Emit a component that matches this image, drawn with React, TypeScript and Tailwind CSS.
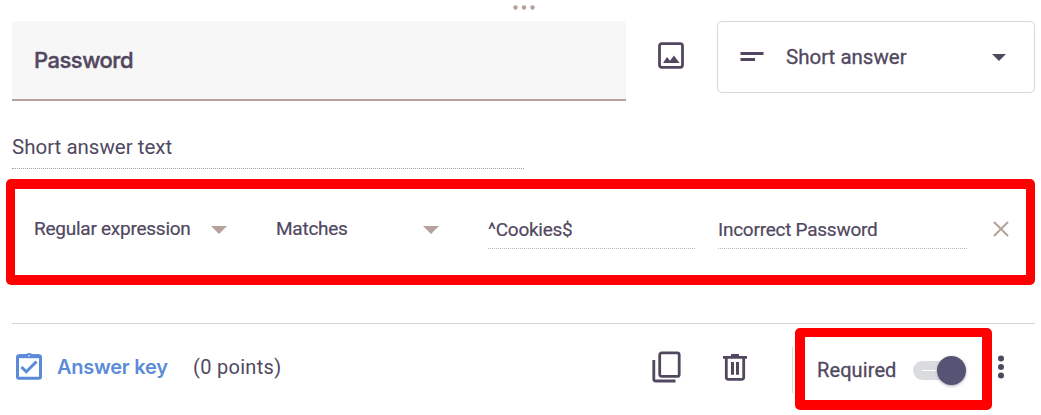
import React from "react";

function Caret({ className }: { className: string }) {
  return (
    <svg viewBox="0 0 16 8" className={className} fill="currentColor">
      <path d="M0 0h16L8 8z" />
    </svg>
  );
}

function QuestionRow() {
  return (
    <div className="mt-[11px] ml-3 flex h-20 items-start">
      <div className="flex h-20 w-[614px] items-center rounded-t-[4px] border-b-2 border-[#b5a29b] bg-[#f7f7f7] pl-[22px]">
        <span className="font-[Inter,sans-serif] text-[22px] leading-7 font-medium tracking-[-0.5px] [-webkit-text-stroke:0.4px]">Password</span>
      </div>
      <svg viewBox="0 0 26 27" className="mt-[21px] ml-8 h-[27px] w-[26px]">
        <rect x="1.5" y="1.7" width="23" height="23.6" rx="2.2" fill="none" stroke="currentColor" strokeWidth="2.8" />
        <path d="M5 21l4-6 3 3.7 4-5.2L21.5 21z" fill="currentColor" />
      </svg>
      <div className="ml-[33px] flex h-[72px] w-[318px] items-center rounded-[5px] border border-[#d6d6de] pl-[22px]">
        <svg viewBox="0 0 24 10" className="-mt-[3px] h-[10px] w-6" fill="currentColor">
          <path d="M.5 1h23v3H.5zM.5 7H15v3H.5z" />
        </svg>
        <span className="ml-[22px] w-[206px] text-[20.5px] leading-6 whitespace-nowrap [-webkit-text-stroke:0.3px]">Short answer</span>
        <Caret className="h-[7px] w-[14px]" />
      </div>
    </div>
  );
}

function ValidationRow() {
  return (
    <div className="mt-[10px] ml-[6px] flex h-[106px] w-[1029px] items-start rounded-[5px] border-x-9 border-y-10 border-[#ff0000] pt-[25px] pl-[19px] text-[19px] leading-[30px] tracking-[-0.25px] whitespace-nowrap [-webkit-text-stroke:0.2px]">
      <span className="w-[177px]">Regular expression</span>
      <Caret className="mt-[12px] h-[8px] w-4 text-[#b5a29b]" />
      <span className="ml-[49px] w-[146px]">Matches</span>
      <Caret className="mt-[12px] ml-px h-[8px] w-4 text-[#b5a29b]" />
      <span className="ml-[49px] h-[35px] w-[207px] border-b border-dotted border-[#b9b9c6] pt-px">^Cookies$</span>
      <span className="ml-[23px] h-[35px] w-[249px] border-b border-dotted border-[#b9b9c6] pt-px">Incorrect Password</span>
      <svg viewBox="0 0 16 16" className="mt-[7px] ml-[26px] h-4 w-4 text-[#b5a29b]" fill="none" stroke="currentColor" strokeWidth="2">
        <path d="M1 1l14 14M15 1L1 15" />
      </svg>
    </div>
  );
}

function Footer() {
  return (
    <div className="ml-3 flex h-[91px] w-[1023px] items-start">
      <svg viewBox="0 0 26 30" className="mt-[27px] ml-1 h-[30px] w-[26px] text-[#5b8bd8]" fill="none" stroke="currentColor">
        <rect x="1.5" y="4.7" width="23" height="22.6" rx="1.5" strokeWidth="3" />
        <path d="M3 5.2h20" strokeWidth="4" />
        <path d="M9 4.5h.8a3.5 3 0 016.4 0h.8z" fill="currentColor" strokeWidth="1.2" />
        <circle cx="13" cy="4.8" r="0.8" fill="white" stroke="none" />
        <path d="M5.5 16l4.8 4.7L20.5 10.5" strokeWidth="3" />
      </svg>
      <span className="mt-7 ml-[15px] w-[136px] font-[Inter,sans-serif] text-[20px] leading-[30px] font-semibold tracking-[-0.25px] whitespace-nowrap text-[#5b8bd8]">Answer key</span>
      <span className="mt-7 w-[459px] text-[20px] leading-[30px] tracking-[0.3px]">(0 points)</span>
      <svg viewBox="0 0 29 32" className="mt-[27px] h-8 w-[29px]" fill="none" stroke="currentColor" strokeWidth="2.8">
        <rect x="7.7" y="1.9" width="19.5" height="23.5" rx="2" />
        <path d="M1.8 9v19a2 2 0 002 2H23.5" />
      </svg>
      <svg viewBox="0 0 24 28" className="mt-[29px] ml-[42px] h-7 w-6" fill="none" stroke="currentColor">
        <path d="M0 4.3h24M8 2.5h8" strokeWidth="2.8" />
        <path d="M3.3 5v19.5a1.8 1.8 0 001.8 1.8h13.8a1.8 1.8 0 001.8-1.8V5" strokeWidth="2.8" />
        <path d="M9.5 9v12.7M14.5 9v12.7" strokeWidth="3" />
      </svg>
      <div className="mt-[23px] ml-[45px] h-[46px] w-px bg-[#dadce0]" />
      <div className="mt-1 ml-[2px] flex h-[82px] w-[197px] shrink-0 items-center rounded-[5px] border-10 border-t-9 border-[#ff0000] pl-3">
        <span className="mt-[3px] w-[96px] text-[20px] leading-6 tracking-[0.1px] [-webkit-text-stroke:0.3px]">Required</span>
        <div className="relative mt-[3px] h-[19px] w-[50px] rounded-full bg-[#dadce0]">
          <div className="absolute top-[9px] left-[9px] h-px w-[14px] bg-white" />
          <div className="absolute -top-[5px] left-[24px] h-[29px] w-[29px] rounded-full bg-[#565475] shadow-[0_1px_3px_#aaa]" />
        </div>
      </div>
      <svg viewBox="0 0 6 24" className="mt-[31px] ml-[6px] h-6 w-[6px]" fill="currentColor">
        <circle cx="3" cy="3.4" r="3" />
        <circle cx="3" cy="12" r="3" />
        <circle cx="3" cy="20.5" r="3" />
      </svg>
    </div>
  );
}

export default function App() {
  return (
    <main className="flex h-[415px] w-[1041px] flex-col overflow-hidden bg-white font-[Roboto,sans-serif] text-[#51485f]">
      <svg viewBox="0 0 22 5" className="mt-[5px] ml-[513px] h-[5px] w-[22px] shrink-0 text-[#b5a29b]" fill="currentColor">
        <circle cx="2.5" cy="2.5" r="2.2" />
        <circle cx="11" cy="2.5" r="2.2" />
        <circle cx="19.5" cy="2.5" r="2.2" />
      </svg>
      <QuestionRow />
      <div className="mt-[31px] ml-3 h-[37px] w-[512px] border-b border-dotted border-[#a79f9f] text-[20.5px] leading-[30px]">
        Short answer text
      </div>
      <ValidationRow />
      <div className="mt-[38px] ml-3 h-px w-[1023px] bg-[#d3d3da]" />
      <Footer />
    </main>
  );
}
